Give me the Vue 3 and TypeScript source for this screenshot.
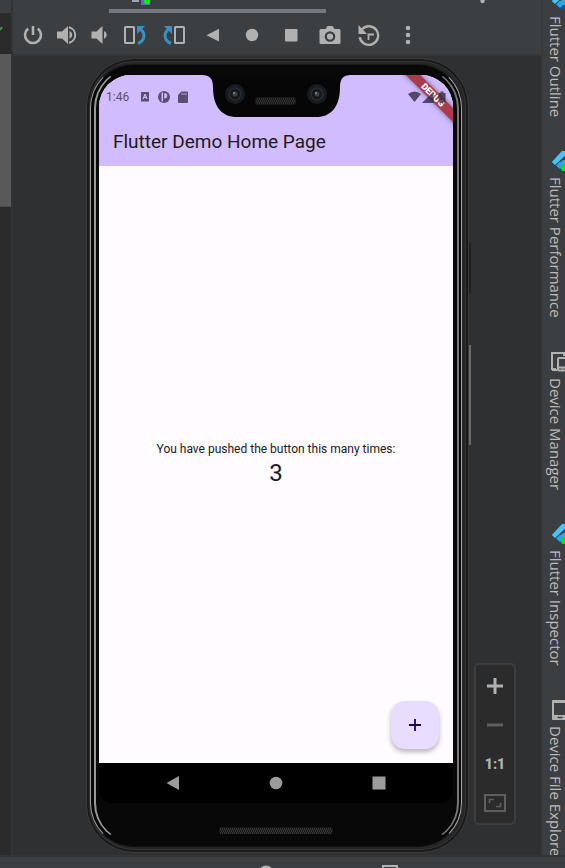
<script setup lang="ts">
import { ref } from 'vue'

type ToolWindow = { label: string; icon: 'flutter' | 'manager' | 'device'; live?: boolean }

const count = ref<number>(3)

const toolWindows: ToolWindow[] = [
  { label: 'Flutter Outline', icon: 'flutter' },
  { label: 'Flutter Performance', icon: 'flutter', live: true },
  { label: 'Device Manager', icon: 'manager' },
  { label: 'Flutter Inspector', icon: 'flutter', live: true },
  { label: 'Device File Explore', icon: 'device' },
]
</script>

<template>
  <div class="ide">
    <div class="workspace">
      <aside class="editor-edge">
        <div class="edge-head"></div>
        <div class="edge-mark">
          <svg width="3" height="8" viewBox="0 0 3 8"><path d="M0 3 L2 0" stroke="#3f9b4b" stroke-width="2" fill="none" /></svg>
        </div>
        <div class="edge-thumb"></div>
      </aside>

      <main class="emulator">
        <header class="tabs">
          <div class="tab">
            <svg width="22" height="6" viewBox="0 0 22 6">
              <path d="M0 0h7v2H0z" fill="#9aa7b0" />
              <path d="M9 0h9v5H9z" fill="#7b5bb5" />
              <circle cx="15" cy="1.5" r="3" fill="#00f000" />
            </svg>
          </div>
          <svg class="tab-menu" width="5" height="4" viewBox="0 0 5 4"><circle cx="2.5" cy="1" r="2.2" fill="#afb1b3" /></svg>
        </header>

        <div class="toolbar">
          <button class="tool narrow" aria-label="Power">
            <svg width="24" height="24" viewBox="0 0 24 24" fill="none" stroke="#afb1b3" stroke-width="2.6">
              <path d="M12 3v9" /><path d="M7.200 5.600a8 8 0 1 0 9.600 0" />
            </svg>
          </button>
          <button class="tool narrow" aria-label="Volume up">
            <svg width="24" height="24" viewBox="0 0 24 24">
              <path d="M3 8.500h5L14 3v18l-6-5.500H3z" fill="#afb1b3" />
              <path d="M15.500 8a4.300 4.300 0 0 1 0 8z" fill="#afb1b3" />
              <path d="M15 4.200a8 8 0 0 1 0 15.600" fill="none" stroke="#afb1b3" stroke-width="2" />
            </svg>
          </button>
          <button class="tool narrow" aria-label="Volume down">
            <svg width="24" height="24" viewBox="0 0 24 24" fill="#afb1b3">
              <path d="M4.500 8.500h5L15.500 3v18l-6-5.500h-5z" /><path d="M17 8a4.300 4.300 0 0 1 0 8z" />
            </svg>
          </button>
          <button class="tool" aria-label="Rotate left">
            <svg width="24" height="24" viewBox="0 0 24 24" fill="none">
              <rect x="2" y="4" width="9" height="16" rx=".5" stroke="#afb1b3" stroke-width="2" />
              <path d="M15 20.500c7-3 7.500-9.500 3-14" stroke="#3592c4" stroke-width="3" /><path d="M14 3h8l-8 8z" fill="#3592c4" />
            </svg>
          </button>
          <button class="tool" aria-label="Rotate right">
            <svg width="24" height="24" viewBox="0 0 24 24" fill="none">
              <rect x="13" y="4" width="9" height="16" rx=".5" stroke="#afb1b3" stroke-width="2" />
              <path d="M9 20.500C2 17.500 1.500 11 6 6.500" stroke="#3592c4" stroke-width="3" /><path d="M10 3H2l8 8z" fill="#3592c4" />
            </svg>
          </button>
          <button class="tool" aria-label="Back">
            <svg width="24" height="24" viewBox="0 0 24 24"><path d="M18 5.800v12.800L5.500 12.200z" fill="#afb1b3" /></svg>
          </button>
          <button class="tool" aria-label="Home">
            <svg width="24" height="24" viewBox="0 0 24 24"><circle cx="12" cy="12" r="6.200" fill="#afb1b3" /></svg>
          </button>
          <button class="tool" aria-label="Overview">
            <svg width="24" height="24" viewBox="0 0 24 24"><rect x="6" y="6" width="12.500" height="12.500" rx="1" fill="#afb1b3" /></svg>
          </button>
          <button class="tool" aria-label="Screenshot">
            <svg width="24" height="24" viewBox="0 0 24 24">
              <path d="M3 6h4.500L9.500 3h5l2 3H21q1.500 0 1.500 1.500v12Q22.500 21 21 21H3q-1.500 0-1.500-1.500v-12Q1.500 6 3 6z" fill="#afb1b3" />
              <circle cx="12" cy="13.500" r="4.200" fill="none" stroke="#3c3f41" stroke-width="2.200" />
            </svg>
          </button>
          <button class="tool" aria-label="Snapshots">
            <svg width="24" height="24" viewBox="0 0 24 24" fill="none" stroke="#afb1b3">
              <path d="M5 6.200a9.300 9.300 0 1 1-2.300 8" stroke-width="2.400" />
              <path d="M1.500 2v9H10z" fill="#afb1b3" stroke="none" />
              <path d="M11.500 17v-5.500H17" stroke-width="1.800" />
            </svg>
          </button>
          <button class="tool" aria-label="More">
            <svg width="24" height="24" viewBox="0 0 24 24" fill="#afb1b3"><circle cx="12" cy="5" r="2.300" /><circle cx="12" cy="12" r="2.300" /><circle cx="12" cy="19" r="2.300" /></svg>
          </button>
        </div>

        <section class="stage">
          <div class="phone">
            <span class="side-key power"></span>
            <span class="side-key volume"></span>
            <div class="rim">
              <div class="glass">
                <div class="screen">
                  <div class="banner">DEBUG</div>
                  <div class="app-head">
                    <div class="status">
                      <span class="clock">1:46</span>
                      <svg width="10" height="12" viewBox="0 0 10 12">
                        <path fill-rule="evenodd" d="M1 1h8v9.500H1zM4.400 3 2.500 8h1.200l.4-1h1.900l.4 1h1.200L5.600 3zM5 4.600 5.500 6h-1z" fill="#594f70" />
                      </svg>
                      <svg width="12" height="12" viewBox="0 0 12 12">
                        <circle cx="6" cy="6" r="6" fill="#594f70" />
                        <path d="M4.300 1.500v9" stroke="#d1bcff" stroke-width="1.500" />
                        <path d="M6.300 2v5.500c4 0 4-5.500 0-5.500z" fill="#d1bcff" />
                      </svg>
                      <svg width="10" height="12" viewBox="0 0 10 12">
                        <path d="M3.500.5H9q1 0 1 1V11q0 1-1 1H1q-1 0-1-1V4z" fill="#594f70" />
                        <path d="M4 2v2M6 2v2M8 2v2" stroke="#d1bcff" stroke-width=".8" />
                      </svg>
                      <svg class="signals" width="38" height="12" viewBox="0 0 38 12" fill="#30283f" fill-opacity=".78">
                        <path d="M0 3Q6.500-2 13 3L6.500 11z" /><path d="M14 12h11.500V.5z" />
                        <path d="M30.500 2h2V.5h3V2h2v9.500h-7z" />
                      </svg>
                    </div>
                    <h1>Flutter Demo Home Page</h1>
                  </div>
                  <div class="counter">
                    <p class="message">You have pushed the button this many times:</p>
                    <p class="count">{{ count }}</p>
                    <button class="fab" aria-label="Increment" @click="count++">
                      <svg width="14" height="14" viewBox="0 0 14 14"><path d="M7 1v12M1 7h12" stroke="#21005d" stroke-width="1.800" /></svg>
                    </button>
                  </div>
                  <nav class="android-nav">
                    <button aria-label="Back"><svg width="14" height="14" viewBox="0 0 14 14"><path d="M13 0v14L.5 7z" fill="#9b9b9b" /></svg></button>
                    <button aria-label="Home"><svg width="14" height="14" viewBox="0 0 14 14"><circle cx="7" cy="7" r="6.300" fill="#9b9b9b" /></svg></button>
                    <button aria-label="Recents"><svg width="14" height="14" viewBox="0 0 14 14"><rect x=".5" y=".5" width="13" height="13" rx=".5" fill="#9b9b9b" /></svg></button>
                  </nav>
                  <svg class="notch" width="149" height="42" viewBox="0 0 149 42">
                    <path d="M0 0C8 0 11 4 11 12C11 32 20 42 35 42H114C129 42 138 32 138 12C138 4 141 0 149 0z" fill="#060606" />
                    <g v-for="x in [33, 115]" :key="x">
                      <circle :cx="x" cy="19" r="10" fill="#151c22" />
                      <circle :cx="x" cy="19" r="6" fill="#14181b" stroke="#272d31" stroke-width="1.500" />
                      <circle :cx="x" cy="19" r="2.500" fill="#3a4147" />
                      <circle :cx="x - 1" cy="18" r=".9" fill="#8d969b" />
                    </g>
                    <rect x="53" y="22" width="41" height="8" rx="3" fill="#181818" />
                    <path d="M55 24h37M54 26h39M55 28h37" stroke="#484848" stroke-width="1" stroke-dasharray="1 1" />
                  </svg>
                </div>
                <div class="chin">
                  <svg width="114" height="8" viewBox="0 0 114 8">
                    <rect width="114" height="7" rx="3" fill="#191919" />
                    <path d="M1 2h112M2 4h112M1 6h112" stroke="#505050" stroke-dasharray="1 1" />
                  </svg>
                </div>
              </div>
            </div>
          </div>

          <div class="zoom">
            <button aria-label="Zoom in"><svg width="18" height="18" viewBox="0 0 18 18"><path d="M9 1v16M1 9h16" stroke="#afb1b3" stroke-width="3" /></svg></button>
            <button aria-label="Zoom out" disabled><svg width="18" height="18" viewBox="0 0 18 18"><path d="M1 9h16" stroke="#5e6060" stroke-width="3" /></svg></button>
            <button class="actual">1:1</button>
            <button aria-label="Fit screen" disabled>
              <svg width="22" height="18" viewBox="0 0 22 18" fill="none" stroke="#5e6060">
                <rect x="1" y="1" width="20" height="16" stroke-width="2" />
                <path d="M5.500 9V5.500H10M12 12.500h4.500V9" stroke-width="1.600" />
              </svg>
            </button>
          </div>
        </section>
      </main>

      <aside class="tool-windows">
        <a v-for="item in toolWindows" :key="item.label" href="#">
          <svg v-if="item.icon === 'flutter'" width="20" height="20" viewBox="0 0 20 20">
            <path d="M11 0h8L4 14 .8 11z" fill="#47c5fb" />
            <path d="M12 9h7l-7 7-5-2z" fill="#2ba9ee" /><path d="M8 17.500 11 14l7 6h-7z" fill="#00569e" />
            <path d="m5 14.500 4-4 4 3.500-4 4z" fill="#22a7f0" />
            <circle v-if="item.live" cx="14" cy="17" r="4" fill="#00e500" />
          </svg>
          <svg v-else-if="item.icon === 'manager'" width="20" height="20" viewBox="0 0 20 20" fill="none" stroke="#afb1b3" stroke-width="2">
            <path d="M5 17H1V1h12v3" /><path d="M1 18h5" />
            <rect x="7" y="6" width="9" height="12.500" rx="1" /><path d="M7 15.500h9" /><path d="M10.500 17h2" stroke-width="1" />
          </svg>
          <svg v-else width="20" height="20" viewBox="0 0 20 20">
            <rect x="1" y="0" width="15" height="20" rx="1" fill="#afb1b3" />
            <rect x="3" y="3" width="11" height="12" fill="#3c3f41" /><path d="M6.500 17.500h5" stroke="#3c3f41" stroke-width="1.500" />
          </svg>
          <span>{{ item.label }}</span>
        </a>
      </aside>
    </div>

    <footer class="bottom-bar">
      <svg width="18" height="3" viewBox="0 0 18 3"><circle cx="9" cy="8" r="7.500" fill="#afb1b3" /></svg>
      <svg width="16" height="3" viewBox="0 0 16 3"><path d="M1 3V1h14v2" stroke="#afb1b3" stroke-width="2" fill="none" /></svg>
    </footer>
  </div>
</template>

<style>
body {
  background: #2f3032;
  overflow: hidden;
}
</style>

<style scoped>
* {
  box-sizing: border-box;
}
svg {
  display: block;
  flex: none;
}
button {
  display: grid;
  place-items: center;
  padding: 0;
  border: 0;
  background: none;
}
.ide {
  display: flex;
  flex-direction: column;
  height: 100vh;
  font-family: Roboto, "Liberation Sans", sans-serif;
}
.workspace {
  flex: 1;
  min-height: 0;
  display: flex;
}
.editor-edge {
  width: 13px;
  background: #2b2b2b;
  border-right: 2px solid #333436;
}
.edge-head {
  height: 13px;
  background: #3c3f41;
}
.edge-mark {
  height: 41px;
  padding-top: 14px;
}
.edge-thumb {
  height: 153px;
  background: #595959;
  border-bottom: 1px solid #4b4b4b;
}
.emulator {
  flex: 1;
  min-width: 0;
  display: flex;
  flex-direction: column;
}
.tabs {
  height: 16px;
  display: flex;
  background: #3c3f41;
  padding-left: 96px;
}
.tab {
  width: 217px;
  height: 13px;
  padding-left: 23px;
  border-bottom: 4px solid #747a80;
}
.tab-menu {
  margin-left: auto;
  margin-right: 56px;
}
.toolbar {
  height: 40px;
  padding-left: 3px;
  display: flex;
  background: #3c3f41;
  border-bottom: 2px solid #343638;
}
.tool {
  width: 39px;
}
.tool.narrow {
  width: 33px;
}
.stage {
  flex: 1;
  min-height: 0;
  display: flex;
  align-items: flex-end;
  gap: 5px;
  padding: 2px 25px 2px 73px;
  background: #2f3032;
}
.phone {
  position: relative;
  flex: 1;
  align-self: stretch;
  display: flex;
  padding: 5px 6px 5px 3px;
  border: 1px solid #3b3b3b;
  border-radius: 48px;
  background: #262626;
  box-shadow: inset 0 0 0 2px #1a1a1a, inset 0 0 0 3px #343434;
}
.rim {
  flex: 1;
  display: flex;
  padding: 3px 2px 3px 3px;
  border: 1px solid;
  border-color: #171717 #a8a8a8 #111111 #999999;
  border-radius: 44px;
  background: #080808;
}
.glass {
  flex: 1;
  display: flex;
  flex-direction: column;
  padding: 6px 4px 0 3px;
  border: 1px solid;
  border-width: 1px 2px;
  border-color: #0a0a0a #777777 #0a0a0a #999999;
  border-radius: 40px;
  background: #080808;
}
.side-key {
  position: absolute;
  right: -3px;
  width: 2px;
}
.side-key.power {
  top: 184px;
  height: 50px;
  background: #202122;
}
.side-key.volume {
  top: 286px;
  height: 100px;
  background: #6a6a6a;
}
.screen {
  position: relative;
  flex: 1;
  display: flex;
  flex-direction: column;
  overflow: hidden;
  border-radius: 32px 32px 14px 14px;
  background: linear-gradient(#fffbff 90%, #000000 90%);
}
.app-head {
  height: 91px;
  background: #d1bcff;
}
.status {
  position: relative;
  z-index: 2;
  display: flex;
  align-items: center;
  height: 44px;
  padding: 0 7px;
}
.clock {
  width: 34px;
  font-size: 12px;
  line-height: 16px;
  color: #594f70;
}
.status svg + svg {
  margin-left: 8px;
}
.status .signals {
  margin-left: auto;
}
h1 {
  margin: 0;
  padding: 11px 14px;
  font-size: 19px;
  line-height: 24px;
  font-weight: 400;
  color: #1c1a20;
}
.banner {
  position: absolute;
  z-index: 1;
  top: 15px;
  right: -30px;
  width: 100px;
  height: 10px;
  transform: rotate(45deg);
  background: #a93b4d;
  box-shadow: 0 0 5px rgba(0, 0, 0, 0.5);
  color: #ffffff;
  font-size: 9px;
  line-height: 10px;
  font-weight: 900;
  text-align: center;
}
.counter {
  position: relative;
  flex: 1;
  display: flex;
  flex-direction: column;
  align-items: center;
  justify-content: center;
  background: #fffbff;
  color: #1c1a20;
}
.message,
.count {
  margin: 0;
}
.message {
  font-size: 12px;
  line-height: 16px;
}
.count {
  font-size: 24px;
  line-height: 32px;
}
.fab {
  position: absolute;
  right: 14px;
  bottom: 14px;
  width: 48px;
  height: 48px;
  border-radius: 14px;
  background: #e9ddff;
  box-shadow: 0 3px 5px rgba(0, 0, 0, 0.28);
}
.android-nav {
  height: 40px;
  padding: 0 23px;
  display: grid;
  grid-template-columns: repeat(3, 1fr);
  background: #000000;
}
.notch {
  position: absolute;
  z-index: 3;
  top: 0;
  left: calc(50% - 74px);
}
.chin {
  height: 39px;
  display: flex;
  justify-content: center;
  padding-top: 24px;
}
.zoom {
  width: 42px;
  margin-bottom: 28px;
  padding: 1px 0;
  border: 2px solid #3d3e3f;
  border-radius: 5px;
  background: #2b2b2b;
}
.zoom button {
  width: 100%;
  height: 39px;
}
.zoom .actual {
  font: 900 14px/16px Roboto, sans-serif;
  color: #afb1b3;
}
.tool-windows {
  width: 24px;
  overflow: hidden;
  display: flex;
  flex-direction: column;
  gap: 34px;
  padding-left: 8px;
  border-left: 2px solid #37393b;
  background: #3c3f41;
}
.tool-windows a {
  flex: none;
  display: flex;
  flex-direction: column;
  gap: 6px;
  color: #bbbbbb;
  text-decoration: none;
}
.tool-windows a:first-child {
  margin-top: -10px;
}
.tool-windows span {
  align-self: flex-start;
  margin-left: -3px;
  writing-mode: vertical-rl;
  white-space: nowrap;
  font: 15px/16px "Open Sans", "Noto Sans", sans-serif;
}
.bottom-bar {
  height: 13px;
  display: flex;
  align-items: flex-end;
  gap: 107px;
  padding-left: 257px;
  border-top: 2px solid #343638;
  background: #3c3f41;
}
</style>
